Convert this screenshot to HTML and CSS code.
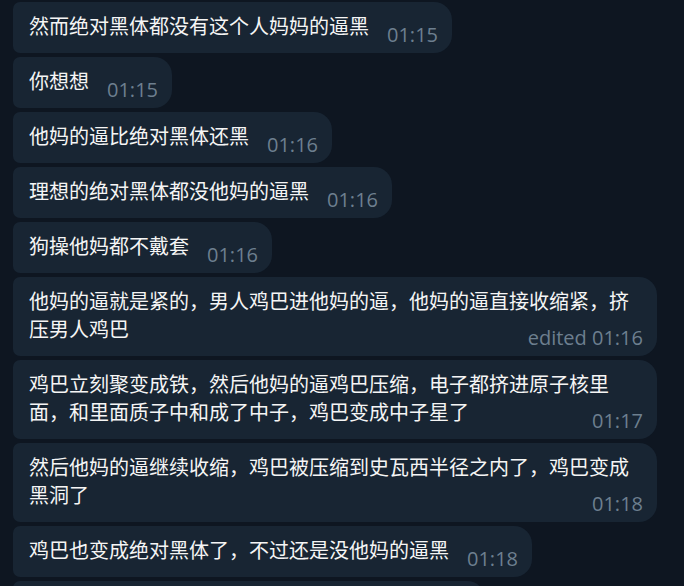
FILE: index.html
```html
<!DOCTYPE html>
<html lang="zh">
<head>
  <meta charset="UTF-8" />
  <meta name="viewport" content="width=device-width, initial-scale=1.0"/>
  <title>Chat</title>
  <link rel="stylesheet" href="styles.css">
</head>
<body>
  <main class="chat">
    <div class="bubble">然而绝对黑体都没有这个人妈妈的逼黑<span class="time">01:15</span></div>
    <div class="bubble">你想想<span class="time">01:15</span></div>
    <div class="bubble">他妈的逼比绝对黑体还黑<span class="time">01:16</span></div>
    <div class="bubble">理想的绝对黑体都没他妈的逼黑<span class="time">01:16</span></div>
    <div class="bubble">狗操他妈都不戴套<span class="time">01:16</span></div>
    <div class="bubble">他妈的逼就是紧的，男人鸡巴进他妈的逼，他妈的逼直接收缩紧，挤压男人鸡巴<span class="time">edited 01:16</span></div>
    <div class="bubble">鸡巴立刻聚变成铁，然后他妈的逼鸡巴压缩，电子都挤进原子核里面，和里面质子中和成了中子，鸡巴变成中子星了<span class="time">01:17</span></div>
    <div class="bubble">然后他妈的逼继续收缩，鸡巴被压缩到史瓦西半径之内了，鸡巴变成黑洞了<span class="time">01:18</span></div>
    <div class="bubble">鸡巴也变成绝对黑体了，不过还是没他妈的逼黑<span class="time">01:18</span></div>
    <div class="bubble bubble-cut"></div>
  </main>
</body>
</html>
```

FILE: styles.css
```css
html, body {
  margin: 0;
  height: 100%;
  overflow: hidden;
}
body {
  background: #0e1621;
  font-family: "Open Sans", "Noto Sans CJK SC", sans-serif;
  color: #f5f5f5;
}
.chat {
  display: flex;
  flex-direction: column;
  align-items: flex-start;
  gap: 4px;
  padding: 2px 0 0 13px;
}
.bubble {
  display: flow-root;
  box-sizing: border-box;
  max-width: 644px;
  padding: 11px 14px 8px 16px;
  background: #182533;
  border-radius: 7px 18px 18px 7px;
  font-size: 20px;
  line-height: 28px;
}
.time {
  float: right;
  margin: 12px 0 0 18px;
  font-size: 20px;
  line-height: 20px;
  color: #6d7f8f;
}
.bubble-cut {
  width: 472px;
  height: 51px;
}
```
